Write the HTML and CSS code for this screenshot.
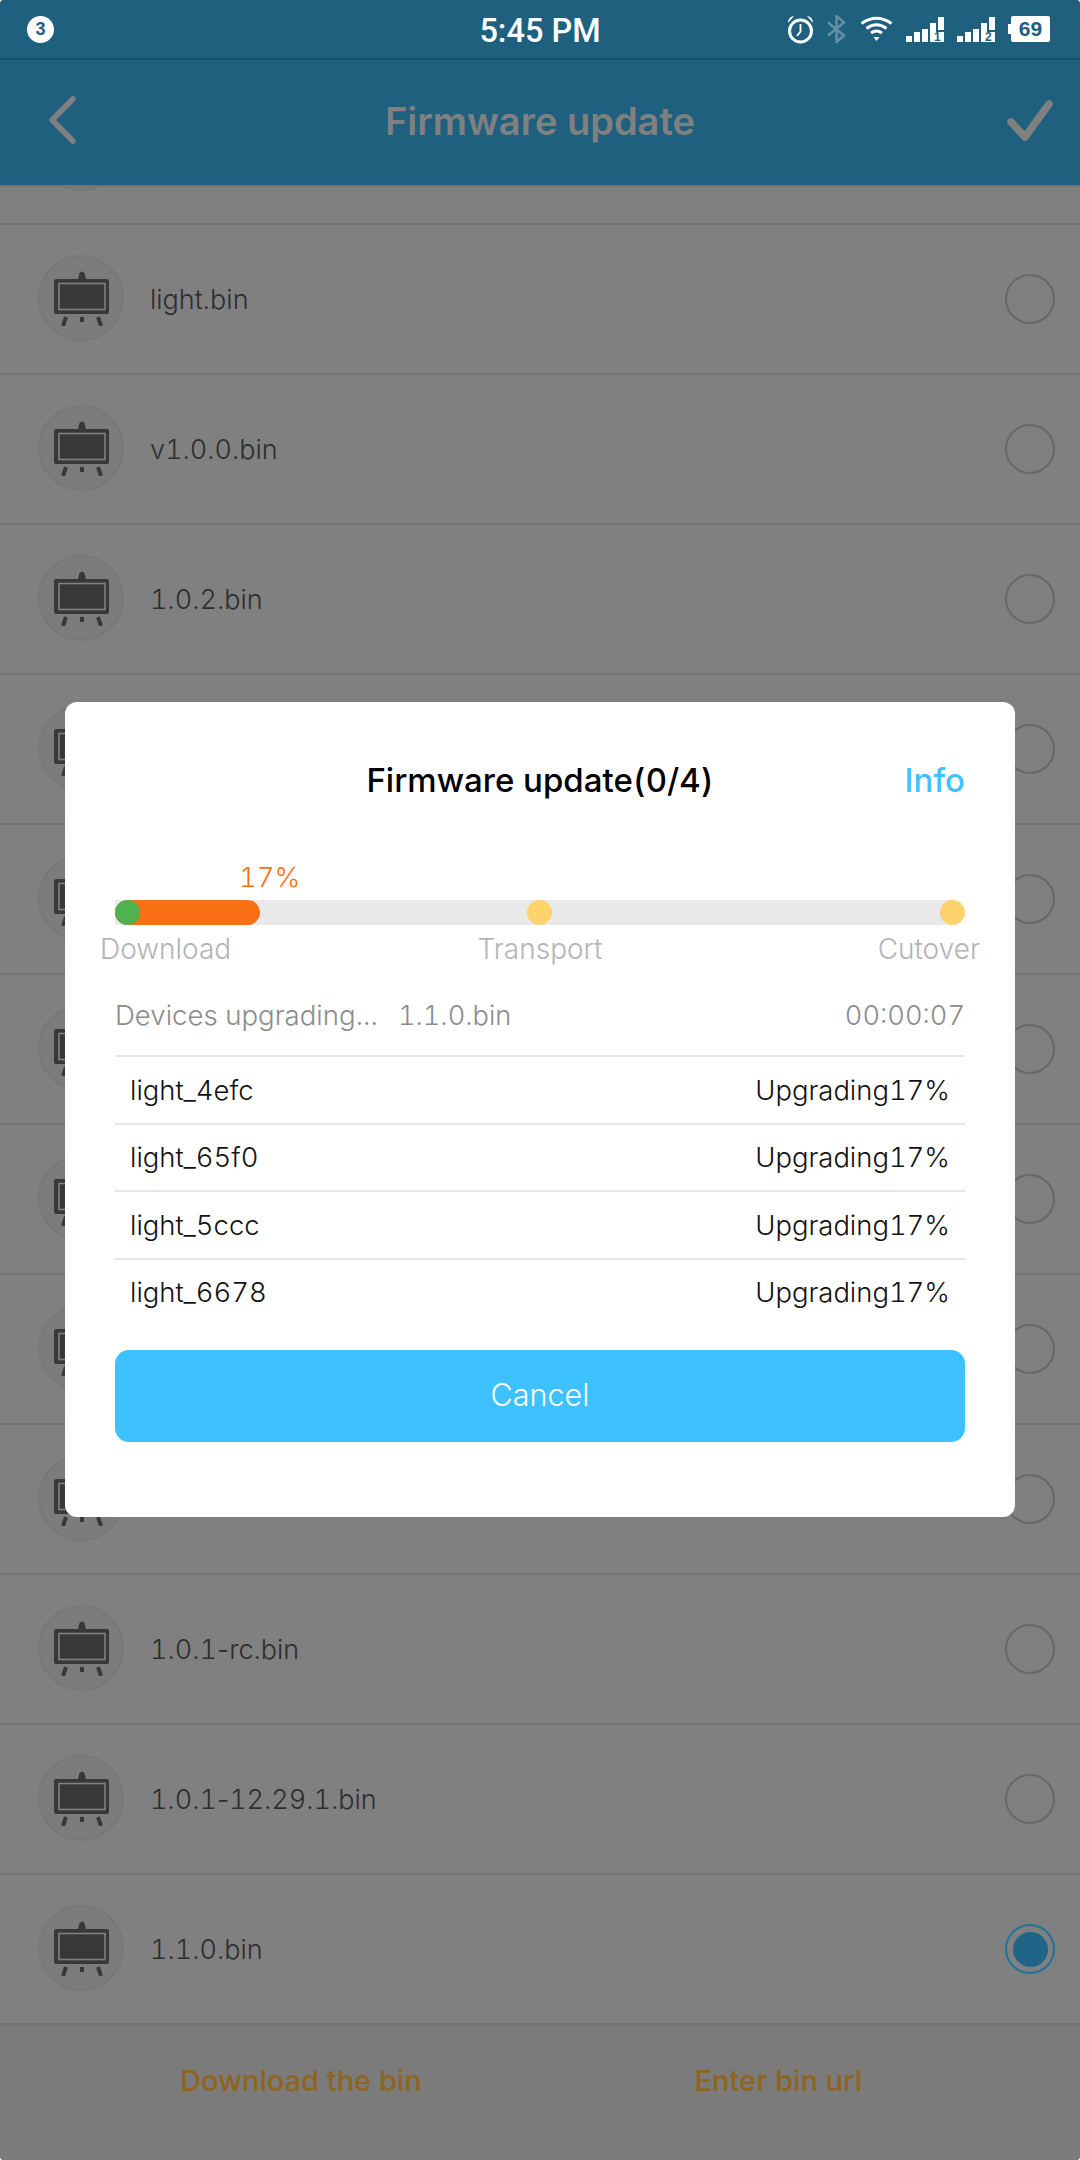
FILE: index.html
```html
<!DOCTYPE html>
<html lang="en">
<head>
    <meta charset="UTF-8">
    <meta name="viewport" content="width=device-width, initial-scale=1.0">
    <title>Firmware update</title>
    <link rel="stylesheet" href="styles.css">
</head>
<body>
<svg class="defs" width="0" height="0">
    <symbol id="easel" viewBox="0 0 55 55">
        <path d="M24 8 L25.500 2 Q28 -1 30.500 2 L32 8 Z" fill="#383838"/>
        <rect x="0" y="8" width="55" height="35" rx="2" fill="#383838"/>
        <rect x="5" y="12.500" width="46" height="26" fill="none" stroke="#808080" stroke-width="1.600"/>
        <path d="M12 46 L9 55 M28 46 L28 51 M44 46 L47 55" stroke="#383838" stroke-width="4" fill="none"/>
    </symbol>
</svg>

<div class="app">
    <div class="status">
        <div class="badge">3</div>
        <div class="clock">5:45 PM</div>
        <div class="status-icons">
            <svg class="ic-alarm" width="27" height="29" viewBox="0 0 27 29">
                <circle cx="13.500" cy="16" r="11" fill="none" stroke="#fff" stroke-width="3"/>
                <path d="M13.500 9 V16.500 L10 21" fill="none" stroke="#fff" stroke-width="1.800"/>
                <path d="M1 8 Q1 2 7 1 Z M26 8 Q26 2 20 1 Z" fill="#fff"/>
            </svg>
            <svg class="ic-bt" width="20" height="28" viewBox="0 0 20 28">
                <path d="M1 7.500 L17 20.500 L9.500 27 V1 L17 7.500 L1 20.500" fill="none" stroke="#fff" stroke-width="2.500"/>
            </svg>
            <svg class="ic-wifi" width="33" height="26" viewBox="0 0 33 26">
                <path d="M1.500 7.500 Q16.500 -3 31.500 7.500 M6.500 12.500 Q16.500 5 26.500 12.500 M11 17 Q16.500 13 22 17" fill="none" stroke="#fff" stroke-width="3"/>
                <path d="M13.500 21 H19.500 L16.500 25 Z" fill="#fff"/>
            </svg>
            <svg class="ic-signal" width="38" height="29" viewBox="0 0 38 29">
                <path d="M0 19 H6 V25 H0 Z M8 15 H14 V25 H8 Z M16 12 H22 V25 H16 Z M24 6 H30 V15 H38 V25 H24 Z M32 0 H38 V13 H32 Z" fill="#fff"/>
                <text x="28" y="24" class="sim-num">1</text>
            </svg>
            <svg class="ic-signal" width="38" height="29" viewBox="0 0 38 29">
                <path d="M0 19 H6 V25 H0 Z M8 15 H14 V25 H8 Z M16 12 H22 V25 H16 Z M24 6 H30 V15 H38 V25 H24 Z M32 0 H38 V13 H32 Z" fill="#fff"/>
                <text x="28" y="24" class="sim-num">2</text>
            </svg>
            <div class="battery"><span class="battery-level">69</span></div>
        </div>
    </div>

    <div class="topbar">
        <svg class="back" width="32" height="52" viewBox="0 0 32 52">
            <path d="M26 5 L5 26 L26 47" fill="none" stroke="#808080" stroke-width="5.500" stroke-linecap="round" stroke-linejoin="round"/>
        </svg>
        <div class="topbar-title">Firmware update</div>
        <svg class="check" width="46" height="42" viewBox="0 0 46 42">
            <path d="M4 22 L18 37 L42 4" fill="none" stroke="#808080" stroke-width="7.500" stroke-linecap="round" stroke-linejoin="round"/>
        </svg>
    </div>

    <div class="list">
        <div class="row row-cut"><div class="row-icon"></div></div>
        <div class="row"><div class="row-icon"><svg width="55" height="55"><use href="#easel"/></svg></div><div class="row-name">light.bin</div><div class="radio"></div></div>
        <div class="row"><div class="row-icon"><svg width="55" height="55"><use href="#easel"/></svg></div><div class="row-name">v1.0.0.bin</div><div class="radio"></div></div>
        <div class="row"><div class="row-icon"><svg width="55" height="55"><use href="#easel"/></svg></div><div class="row-name">1.0.2.bin</div><div class="radio"></div></div>
        <div class="row"><div class="row-icon"><svg width="55" height="55"><use href="#easel"/></svg></div><div class="radio"></div></div>
        <div class="row"><div class="row-icon"><svg width="55" height="55"><use href="#easel"/></svg></div><div class="radio"></div></div>
        <div class="row"><div class="row-icon"><svg width="55" height="55"><use href="#easel"/></svg></div><div class="radio"></div></div>
        <div class="row"><div class="row-icon"><svg width="55" height="55"><use href="#easel"/></svg></div><div class="radio"></div></div>
        <div class="row"><div class="row-icon"><svg width="55" height="55"><use href="#easel"/></svg></div><div class="radio"></div></div>
        <div class="row"><div class="row-icon"><svg width="55" height="55"><use href="#easel"/></svg></div><div class="radio"></div></div>
        <div class="row"><div class="row-icon"><svg width="55" height="55"><use href="#easel"/></svg></div><div class="row-name">1.0.1<span class="hyphen">-</span>rc.bin</div><div class="radio"></div></div>
        <div class="row"><div class="row-icon"><svg width="55" height="55"><use href="#easel"/></svg></div><div class="row-name">1.0.1<span class="hyphen">-</span>12.29.1.bin</div><div class="radio"></div></div>
        <div class="row"><div class="row-icon"><svg width="55" height="55"><use href="#easel"/></svg></div><div class="row-name">1.1.0.bin</div><div class="radio radio-on"></div></div>
    </div>

    <div class="actions">
        <span>Download the bin</span>
        <span>Enter bin url</span>
    </div>

    <div class="dialog">
        <div class="dialog-head">
            <span></span>
            <div class="dialog-title">Firmware update(0/4)</div>
            <div class="dialog-info">Info</div>
        </div>
        <div class="percent">17%</div>
        <div class="track">
            <div class="track-fill"></div>
            <div class="dot dot-done"></div>
            <div class="dot dot-mid"></div>
            <div class="dot dot-end"></div>
        </div>
        <div class="steps">
            <span class="step-first">Download</span>
            <span>Transport</span>
            <span class="step-last">Cutover</span>
        </div>
        <div class="summary">
            <span class="summary-label">Devices upgrading...</span>
            <span class="summary-bin">1.1.0.bin</span>
            <span class="summary-time">00:00:07</span>
        </div>
        <div class="device"><span>light_4efc</span><span>Upgrading17%</span></div>
        <div class="device"><span>light_65f0</span><span>Upgrading17%</span></div>
        <div class="device"><span>light_5ccc</span><span>Upgrading17%</span></div>
        <div class="device"><span>light_6678</span><span>Upgrading17%</span></div>
        <div class="cancel">Cancel</div>
    </div>
</div>
</body>
</html>
```

FILE: styles.css
```css
body {
    margin: 0;
    background-color: #ffffff;
    font-family: "Inter", "Liberation Sans", sans-serif;
    font-variant-numeric: tabular-nums;
}

.defs {
    position: absolute;
}

.app {
    position: relative;
    width: 1080px;
    height: 2160px;
    overflow: hidden;
    border-radius: 4px;
    background-color: #808080;
    display: flex;
    flex-direction: column;
}

/* status bar */
.status {
    height: 58px;
    flex: none;
    background-color: #20607f;
    border-bottom: 2px solid #19506b;
    display: flex;
    align-items: center;
    position: relative;
    padding-left: 27px;
}

.badge {
    width: 27px;
    height: 27px;
    border-radius: 50%;
    background-color: #ffffff;
    color: #20607f;
    font: bold 18px/27px "Liberation Sans", sans-serif;
    text-align: center;
}

.clock {
    position: absolute;
    left: 0;
    right: 0;
    top: 14px;
    text-align: center;
    color: #ffffff;
    font: 500 32.500px/34px "Roboto", sans-serif;
}

.status-icons {
    margin-left: auto;
    padding-right: 30px;
    display: flex;
    align-items: center;
    gap: 13px;
}

.ic-bt {
    opacity: 0.3;
}

.ic-signal {
    margin-bottom: -4px;
}

.sim-num {
    font: bold 12px "Liberation Sans", sans-serif;
    fill: #20607f;
}

.battery {
    width: 39px;
    height: 26px;
    margin-left: 3px;
    background-color: #ffffff;
    border-radius: 2px;
    position: relative;
    text-align: center;
}

.battery::before {
    content: "";
    position: absolute;
    left: -3px;
    top: 8px;
    width: 3px;
    height: 10px;
    background-color: #ffffff;
}

.battery-level {
    color: #20607f;
    font: bold 21px/26px "Liberation Sans", sans-serif;
}

/* title bar */
.topbar {
    height: 125px;
    flex: none;
    background-color: #20607f;
    display: flex;
    align-items: center;
    justify-content: space-between;
    padding: 0 27px 0 47px;
    position: relative;
}

.topbar-title {
    position: absolute;
    left: 0;
    right: 0;
    margin-top: -3px;
    text-align: center;
    color: #808080;
    font: 600 38px/44px "Inter", "Liberation Sans", sans-serif;
}

.back {
    margin-top: -5px;
}

.check {
    margin-top: -3px;
}

/* list of bins */
.list {
    flex: 1;
    min-height: 0;
    overflow: hidden;
    border-top: 2px solid #757575;
}

.row {
    height: 148px;
    border-bottom: 2px solid #747474;
    display: flex;
    align-items: center;
    padding: 0 25px 0 38px;
}

.row-cut {
    margin-top: -112px;
}

.row-icon {
    width: 82px;
    height: 82px;
    flex: none;
    margin-bottom: 2px;
    border: 2px solid #787878;
    border-radius: 50%;
    background-color: #7c7c7c;
    display: flex;
    align-items: center;
    justify-content: center;
}

.row-name {
    margin-left: 26px;
    color: #2e2e2e;
    font-size: 27px;
    font-weight: 300;
}

.hyphen {
    font-variant-numeric: normal;
}

.radio {
    width: 46px;
    height: 46px;
    margin-left: auto;
    border: 2px solid #676767;
    border-radius: 50%;
}

.radio-on {
    border-color: #20739a;
    background-color: #206487;
    background-clip: content-box;
    padding: 5.500px;
    width: 35px;
    height: 35px;
}

/* bottom actions */
.actions {
    height: 111px;
    flex: none;
    background-color: #7b7b7b;
    padding: 0 0 24px 180px;
    display: flex;
    align-items: center;
    gap: 273px;
    color: #8e6420;
    font-size: 29px;
    font-weight: 500;
}

/* dialog */
.dialog {
    position: absolute;
    left: 65px;
    top: 702px;
    width: 850px;
    height: 765px;
    padding: 50px 50px 0;
    background-color: #ffffff;
    border-radius: 12px;
}

.dialog-head {
    height: 56px;
    display: grid;
    grid-template-columns: 1fr auto 1fr;
    align-items: center;
}

.dialog-title {
    color: #000000;
    font-size: 33px;
    font-weight: 500;
}

.dialog-info {
    text-align: right;
    color: #3dc1ff;
    font-size: 33px;
    font-weight: 500;
}

.percent {
    margin: 54px 0 8px 124px;
    color: #fa7014;
    font-size: 27.500px;
    font-weight: 300;
    line-height: 30px;
}

.track {
    height: 25px;
    position: relative;
    background-color: #e9e9e9;
    border-radius: 0 13px 13px 0;
}

.track-fill {
    width: 145px;
    height: 25px;
    border-radius: 13px;
    background-color: #fa7014;
}

.dot {
    position: absolute;
    top: 0;
    width: 25px;
    height: 25px;
    border-radius: 50%;
    background-color: #ffd36b;
}

.dot-done {
    left: 0;
    background-color: #4fb24f;
}

.dot-mid {
    left: 412px;
}

.dot-end {
    right: 0;
}

.steps {
    margin: 6px -15px 0;
    height: 36px;
    display: grid;
    grid-template-columns: 1fr auto 1fr;
    align-items: center;
    color: #b4b4b4;
    font-size: 28px;
    font-weight: 300;
}

.step-last {
    text-align: right;
}

.summary {
    height: 80px;
    margin-top: 8px;
    display: flex;
    align-items: center;
    color: #8c8c8c;
    font-size: 27.200px;
    font-weight: 300;
}

.summary-label {
    font-size: 27.600px;
}

.summary-bin {
    margin-left: 20px;
}

.summary-time {
    margin-left: auto;
}

.device {
    height: 65.500px;
    border-top: 2px solid #e6e6e6;
    padding: 0 15px;
    display: flex;
    align-items: center;
    justify-content: space-between;
    color: #111111;
    font-size: 27.400px;
    font-weight: 300;
}

.cancel {
    height: 92px;
    margin-top: 25px;
    border-radius: 14px;
    background-color: #3dc1ff;
    color: #ffffff;
    font-size: 30.500px;
    font-weight: 300;
    line-height: 90px;
    text-align: center;
}
```
